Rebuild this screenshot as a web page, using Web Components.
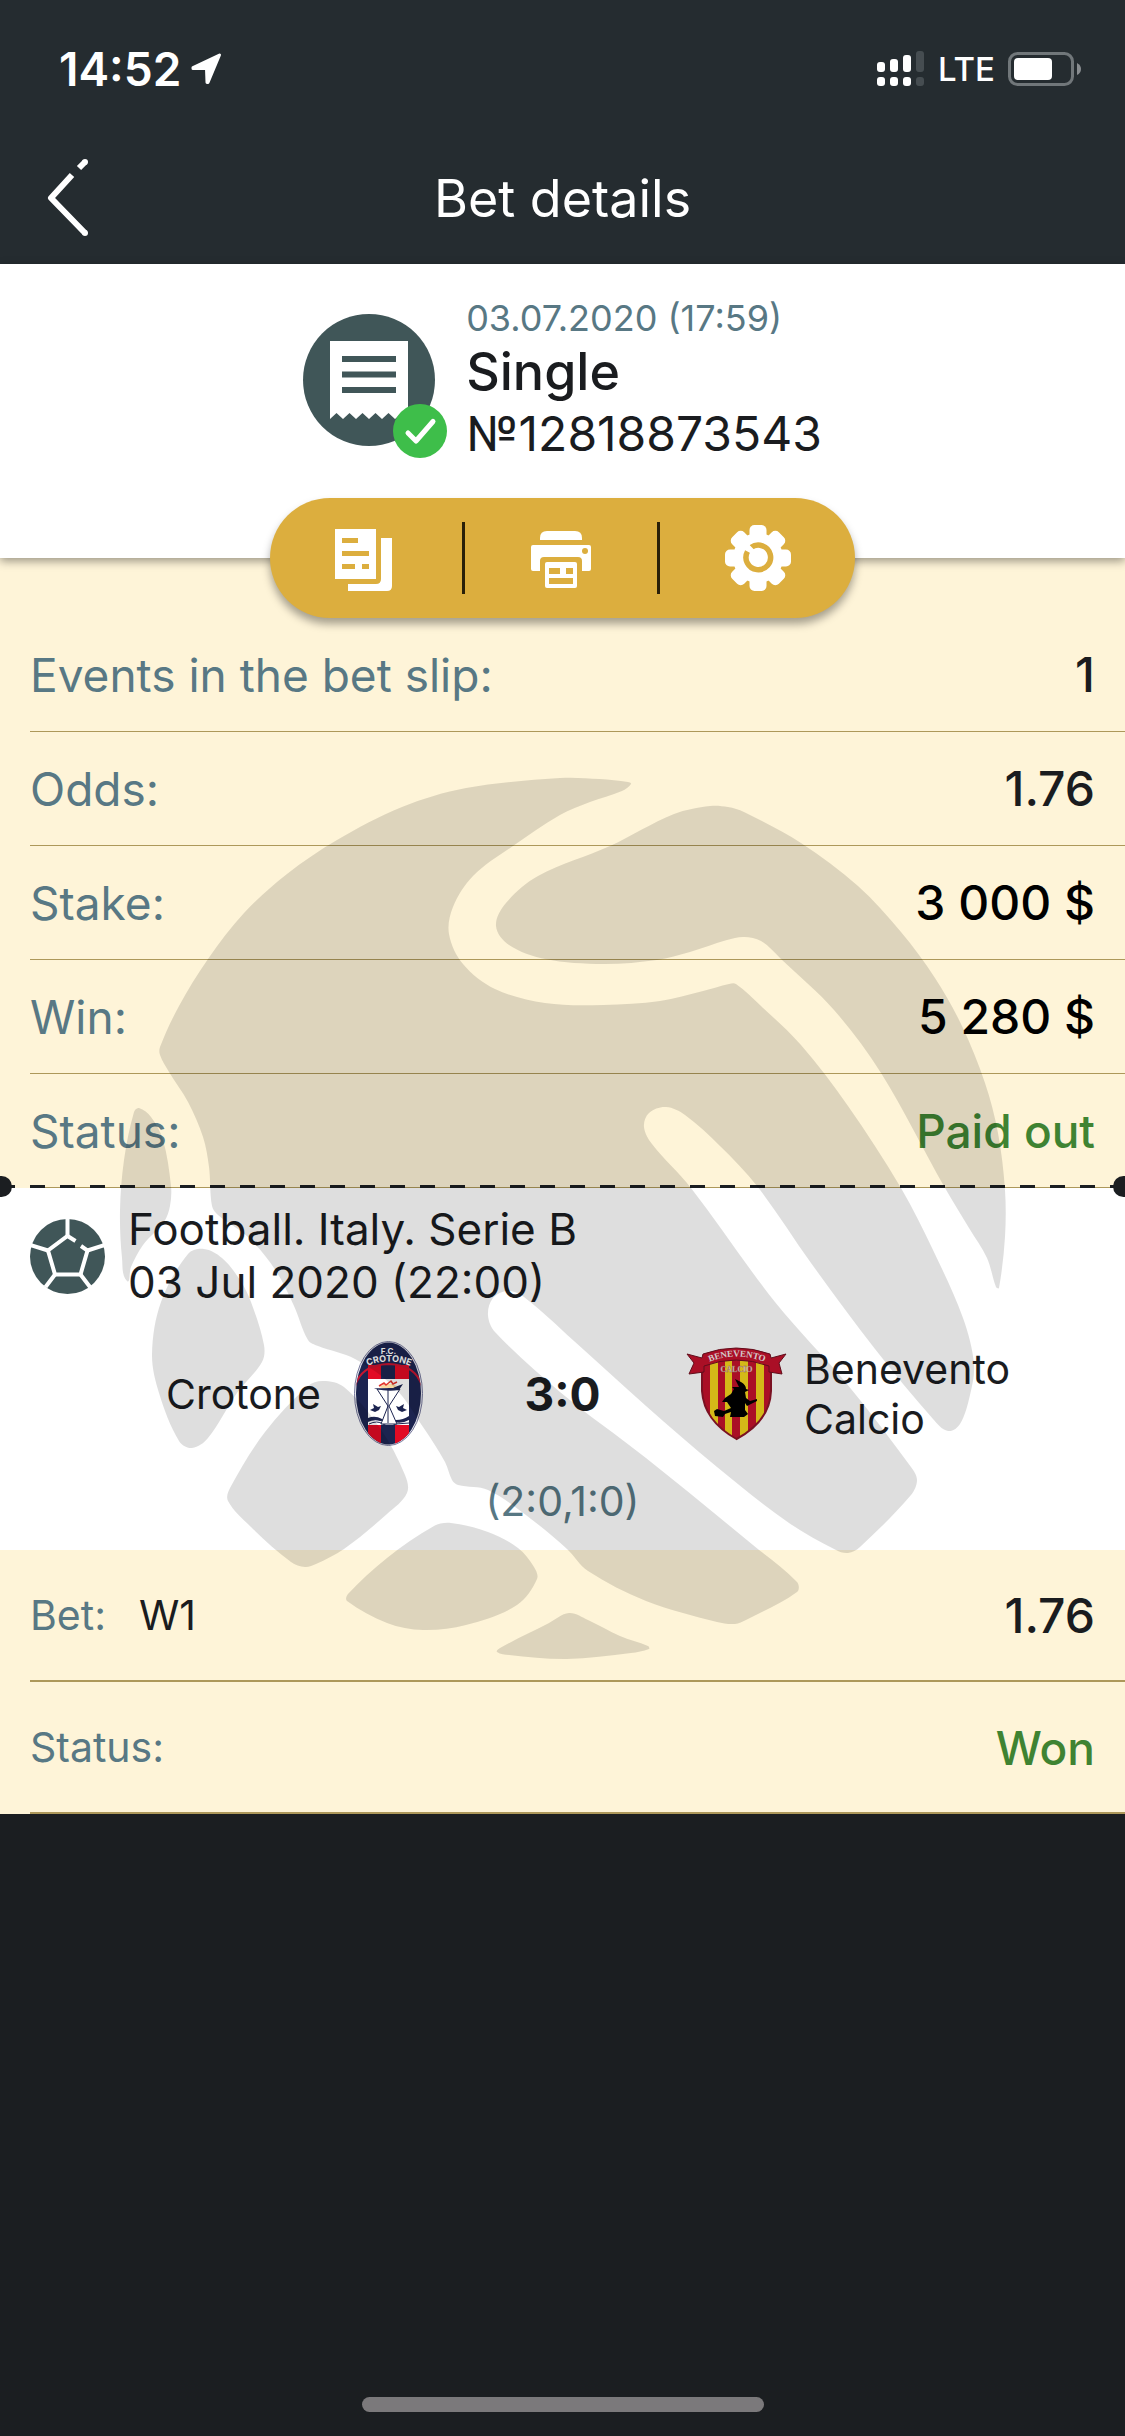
<!DOCTYPE html>
<html lang="en">
<head>
<meta charset="utf-8">
<meta name="viewport" content="width=device-width, initial-scale=1">
<title>Bet details</title>
<style>
  body {
    margin: 0;
    background: #1b1e21;
    color: #1a1c1f;
    font-family: Inter, Roboto, "Liberation Sans", sans-serif;
  }
  .app {
    display: flex;
    flex-direction: column;
    min-height: 100vh;
  }
  .details {
    position: relative;
    background: #fef4d8;
  }
  .money { color: #000; }
  .good { color: #3f8332; font-size: 46px; }
</style>
</head>
<body>
<div class="app">
  <status-bar>14:52<span slot="network">LTE</span></status-bar>
  <page-header>Bet details</page-header>
  <bet-summary>
    <span slot="date">03.07.2020 (17:59)</span>
    <span slot="type">Single</span>
    <span slot="number">№12818873543</span>
  </bet-summary>
  <bet-toolbar></bet-toolbar>
  <main class="details">
    <info-row label="Events in the bet slip:">1</info-row>
    <info-row label="Odds:">1.76</info-row>
    <info-row label="Stake:"><span class="money">3 000 $</span></info-row>
    <info-row label="Win:"><span class="money">5 280 $</span></info-row>
    <info-row label="Status:"><span class="good">Paid out</span></info-row>
    <tear-line></tear-line>
    <match-card>
      <span slot="league">Football. Italy. Serie B</span>
      <span slot="date">03 Jul 2020 (22:00)</span>
      <span slot="home">Crotone</span>
      <crotone-crest slot="home-crest"></crotone-crest>
      <span slot="score">3:0</span>
      <benevento-crest slot="away-crest"></benevento-crest>
      <span slot="away">Benevento Calcio</span>
      <span slot="periods">(2:0,1:0)</span>
    </match-card>
    <info-row size="large" label="Bet:"><span slot="pick">W1</span>1.76</info-row>
    <info-row size="large" label="Status:"><span class="good">Won</span></info-row>
    <ball-watermark></ball-watermark>
  </main>
  <home-indicator></home-indicator>
</div>

<script>
class StatusBar extends HTMLElement {
  constructor() {
    super();
    this.attachShadow({mode: "open"}).innerHTML = `
      <style>
        :host {
          display: flex;
          justify-content: space-between;
          align-items: center;
          height: 138px;
          padding: 0 43px 0 59px;
          background: #252c30;
          color: #fff;
        }
        div { display: flex; align-items: center; }
        .time { gap: 10px; font-size: 46px; font-weight: 600; }
        .state { gap: 13px; font-size: 33px; font-weight: 500; }
        svg { display: block; }
      </style>
      <div class="time"><span><slot></slot></span>
        <svg width="31" height="32" viewBox="0 0 31 32"><path fill="#fff" stroke="#fff" stroke-width="3" stroke-linejoin="round" d="M2 14.500L28.500 2L17 29.500L16 29.500L15.500 15.500L2 15.500Z"/></svg>
      </div>
      <div class="state">
        <svg width="48" height="36" viewBox="0 0 48 36" fill="#fff">
          <rect y="11" width="8" height="10" rx="3"/><rect y="26" width="8" height="9" rx="3"/>
          <rect x="13" y="8" width="8" height="13" rx="3"/><rect x="13" y="26" width="8" height="9" rx="3"/>
          <rect x="26" y="4" width="8" height="17" rx="3"/><rect x="26" y="26" width="8" height="9" rx="3"/>
          <g fill="#464d51"><rect x="39" width="8" height="21" rx="3"/><rect x="39" y="26" width="8" height="9" rx="3"/></g>
        </svg>
        <slot name="network"></slot>
        <svg width="74" height="34" viewBox="0 0 74 34">
          <rect x="1.500" y="1.500" width="63" height="31" rx="8" fill="none" stroke="#71777a" stroke-width="3"/>
          <rect x="6" y="6" width="38" height="22" rx="4" fill="#fff"/>
          <path d="M69 11q4 2 4 6t-4 6z" fill="#898d90"/>
        </svg>
      </div>`;
  }
}

class PageHeader extends HTMLElement {
  constructor() {
    super();
    this.attachShadow({mode: "open"}).innerHTML = `
      <style>
        :host {
          box-sizing: border-box;
          display: grid;
          grid-template-columns: 120px 1fr 120px;
          align-items: center;
          height: 126px;
          padding-bottom: 6px;
          background: #252c30;
          color: #fff;
        }
        button {
          height: 100%;
          padding: 0 0 0 46px;
          border: 0;
          background: none;
          text-align: left;
        }
        svg { display: block; }
        h1 { margin: 0; font-size: 52px; font-weight: 400; text-align: center; }
      </style>
      <button aria-label="Back">
        <svg width="44" height="82" viewBox="0 0 44 82" fill="none" stroke="#fff" stroke-width="6" stroke-linejoin="round">
          <path d="M26 18L5 41L39 76"/>
          <path d="M33 11L39 5"/>
          <g fill="#fff" stroke="none"><circle cx="39" cy="5" r="3"/><circle cx="39" cy="76" r="3"/></g>
        </svg>
      </button>
      <h1><slot></slot></h1>`;
  }
}

class BetSummary extends HTMLElement {
  constructor() {
    super();
    this.attachShadow({mode: "open"}).innerHTML = `
      <style>
        :host {
          display: flex;
          justify-content: center;
          align-items: center;
          gap: 19px;
          padding: 32px 30px 94px;
          background: #fff;
          box-shadow: 0 3px 9px rgba(0, 0, 0, .4);
          position: relative;
        }
        svg { display: block; }
        .date { color: #587884; font-size: 36px; line-height: 44px; }
        .type { font-size: 52px; line-height: 64px; font-weight: 500; }
        .number { font-size: 48px; line-height: 60px; }
      </style>
      <svg width="144" height="156" viewBox="0 -12 144 156">
        <circle cx="66" cy="66" r="66" fill="#405658"/>
        <path fill="#fff" d="M27 27H105V105L98.500 99L92 105L85.500 99L79 105L72.500 99L66 105L59.500 99L53 105L46.500 99L40 105L33.500 99L27 105Z"/>
        <path stroke="#405658" stroke-width="6" d="M39 45H93M39 60.500H93M39 76H93"/>
        <circle cx="117" cy="117" r="27" fill="#3ebe4a"/>
        <path d="M105 119L113 127L130 107.500" fill="none" stroke="#fff" stroke-width="5" stroke-linecap="round" stroke-linejoin="round"/>
      </svg>
      <div>
        <div class="date"><slot name="date"></slot></div>
        <div class="type"><slot name="type"></slot></div>
        <div class="number"><slot name="number"></slot></div>
      </div>`;
  }
}

class BetToolbar extends HTMLElement {
  constructor() {
    super();
    this.attachShadow({mode: "open"}).innerHTML = `
      <style>
        :host { display: block; background: #fef4d8; }
        nav {
          position: relative;
          z-index: 1;
          display: grid;
          grid-template-columns: repeat(3, 1fr);
          align-items: center;
          width: 52%;
          height: 120px;
          margin: -60px auto 0;
          border-radius: 60px;
          background: #dcae3e;
          box-shadow: 0 6px 9px rgba(0, 0, 0, .35);
        }
        button {
          display: flex;
          justify-content: center;
          align-items: center;
          height: 72px;
          padding: 0;
          border: 0;
          border-right: 3px solid #2a2008;
          background: none;
        }
        button:last-child { border: 0; }
        svg { display: block; }
      </style>
      <nav>
        <button aria-label="Copy bet slip">
          <svg width="66" height="66" viewBox="0 -3 66 66">
            <path fill="#fff" d="M2 1H43V51H2ZM48 10H59V58q0 5-5 5H15V56H43q5 0 5-5Z"/>
            <path fill="#dcae3e" d="M9 10h16v5H9zM9 23h27v5H9zM9 36h13v5H9zM29 36h7v5h-7z"/>
          </svg>
        </button>
        <button aria-label="Print">
          <svg width="66" height="66" viewBox="0 -3 66 66">
            <path fill="#fff" d="M12 12V10Q12 3 19 3H47Q54 3 54 10V12ZM5 17H61q2 0 2 2V41q0 2-2 2H54V33q0-4-4-4H16q-4 0-4 4V43H5q-2 0-2-2V19q0-2 2-2Z"/>
            <rect x="17" y="34" width="32" height="26" rx="2" fill="#fff"/>
            <path fill="#dcae3e" d="M21 40h11v6H21zM38 40h7v6h-7zM21 50h24v6H21z"/>
            <circle cx="57" cy="23" r="3" fill="#dcae3e"/>
          </svg>
        </button>
        <button aria-label="Settings">
          <svg width="66" height="66" viewBox="0 0 66 66">
            <g fill="#fff">
              <circle cx="33" cy="33" r="25"/>
              <rect x="24.500" width="17" height="66" rx="5"/>
              <rect x="24.500" width="17" height="66" rx="5" transform="rotate(45 33 33)"/>
              <rect x="24.500" width="17" height="66" rx="5" transform="rotate(90 33 33)"/>
              <rect x="24.500" width="17" height="66" rx="5" transform="rotate(135 33 33)"/>
            </g>
            <path d="M26 22.500A12.300 12.300 0 1 1 22.500 26.500" fill="none" stroke="#dcae3e" stroke-width="5.500"/>
            <path d="M22 21L33 32" stroke="#fff" stroke-width="5"/>
          </svg>
        </button>
      </nav>`;
  }
}

class InfoRow extends HTMLElement {
  constructor() {
    super();
    this.attachShadow({mode: "open"}).innerHTML = `
      <style>
        :host {
          box-sizing: border-box;
          display: flex;
          align-items: center;
          height: 114px;
          margin-left: 30px;
          padding-right: 30px;
          border-bottom: 1px solid #ad985a;
          font-size: 46px;
        }
        :host([size="large"]) {
          height: 132px;
          border-bottom-width: 2px;
        }
        .label { color: #587884; }
        :host([size="large"]) .label,
        ::slotted([slot="pick"]) { font-size: 41px; }
        ::slotted([slot="pick"]) { margin-left: 33px; }
        .value { margin-left: auto; font-size: 48px; font-weight: 500; }
      </style>
      <span class="label"></span>
      <slot name="pick"></slot>
      <span class="value"><slot></slot></span>`;
  }

  connectedCallback() {
    this.shadowRoot.querySelector(".label").textContent = this.getAttribute("label");
  }
}

class TearLine extends HTMLElement {
  constructor() {
    super();
    this.attachShadow({mode: "open"}).innerHTML = `
      <style>
        :host {
          position: relative;
          display: block;
          height: 3px;
          margin-top: -3px;
          background: repeating-linear-gradient(90deg, #1b1e21 0 15px, transparent 15px 30px);
        }
        :host::before, :host::after {
          content: "";
          position: absolute;
          top: -9px;
          width: 21px;
          height: 21px;
          border-radius: 50%;
          background: #1b1e21;
        }
        :host::before { left: -9px; }
        :host::after { right: -9px; }
      </style>`;
  }
}

class MatchCard extends HTMLElement {
  constructor() {
    super();
    this.attachShadow({mode: "open"}).innerHTML = `
      <style>
        :host { display: block; padding: 15px 30px 24px; background: #fff; }
        .event {
          display: flex;
          align-items: center;
          gap: 23px;
          font-size: 44px;
          line-height: 53px;
        }
        .event div div { white-space: nowrap; }
        svg { display: block; }
        .teams {
          display: grid;
          grid-template-columns: 1fr 243px 1fr;
          align-items: center;
          margin: 32px 0 30px;
          font-size: 41px;
          line-height: 50px;
        }
        .team { display: flex; align-items: center; gap: 15px; }
        .home { justify-content: flex-end; }
        .score { font-size: 46px; font-weight: 700; text-align: center; }
        .periods { color: #587884; font-size: 41px; line-height: 50px; text-align: center; }
      </style>
      <div class="event">
        <svg width="75" height="75" viewBox="0 0 75 75">
          <circle cx="37.500" cy="37.500" r="37.500" fill="#405658"/>
          <g fill="none" stroke="#fff" stroke-width="4">
            <path d="M45.500 22L37.500 17L18 31.500L25 55.500H50.500L57.500 31.500L51 27"/>
            <path d="M37.500 17.500V0M18 31.500L0 26M57.500 31.500L75 26M25 55.500L15.500 68M50.500 55.500L60 68"/>
          </g>
        </svg>
        <div>
          <div><slot name="league"></slot></div>
          <div><slot name="date"></slot></div>
        </div>
      </div>
      <div class="teams">
        <div class="team home"><slot name="home"></slot><slot name="home-crest"></slot></div>
        <div class="score"><slot name="score"></slot></div>
        <div class="team"><slot name="away-crest"></slot><slot name="away"></slot></div>
      </div>
      <div class="periods"><slot name="periods"></slot></div>`;
  }
}

class CrotoneCrest extends HTMLElement {
  constructor() {
    super();
    this.attachShadow({mode: "open"}).innerHTML = `
      <style>
        :host { display: block; flex: none; }
        svg { display: block; }
      </style>
      <svg width="105" height="105" viewBox="0 0 105 105">
        <clipPath id="oval"><ellipse cx="52.500" cy="52.500" rx="32.500" ry="51"/></clipPath>
        <ellipse cx="52.500" cy="52.500" rx="34" ry="52" fill="#e9e9f0" stroke="#77799c"/>
        <g clip-path="url(#oval)">
          <path fill="#1c2450" d="M0 0H105V105H0Z"/>
          <path fill="#e20b24" d="M32 24H45V105H32ZM59 24H73V105H59Z"/>
          <path fill="none" stroke="#c61530" stroke-width="2" d="M18 50Q22 24 52.500 23Q83 24 87 50"/>
          <path fill="#fff" d="M32 38H73V84H32Z"/>
          <path fill="#1c2450" d="M32 77Q39 74 46 78T60 79Q67 79 73 75V79Q66 83 58 81T44 80Q38 78 32 81Z"/>
          <path fill="none" stroke="#1c2450" d="M33 83Q41 79 47 83T60 83L73 82"/>
        </g>
        <path fill="#fff" stroke="#1c2450" d="M41 48H64L53 65L61 83H45L52 65Z"/>
        <path fill="none" stroke="#1c2450" d="M52 49V82"/>
        <path fill="#1c2450" d="M38 47Q53 49 67 43L63 49Q52 51 40 48Z"/>
        <path fill="#f7d8a0" d="M43 46Q52 40 61 45L57 47H46Z"/>
        <path fill="none" stroke="#e2352c" stroke-width="1.500" d="M43 45L48 42L50 44L55 40L57 43L61 41"/>
        <path fill="#1c2450" d="M34 69L38 67L37 63L42 66L45 65L43 69L39 71ZM71 69L67 67L68 63L63 66L60 65L62 69L66 71Z"/>
        <path id="arc" fill="none" d="M27 27Q52.500 14 79 27"/>
        <g fill="#fff" font-family="Inter, sans-serif" font-weight="700" text-anchor="middle">
          <text x="52.500" y="13" font-size="8">F.C.</text>
          <text font-size="9"><textPath href="#arc" startOffset="50%">CROTONE</textPath></text>
        </g>
      </svg>`;
  }
}

class BeneventoCrest extends HTMLElement {
  constructor() {
    super();
    this.attachShadow({mode: "open"}).innerHTML = `
      <style>
        :host { display: block; flex: none; }
        svg { display: block; }
      </style>
      <svg width="105" height="105" viewBox="0 0 105 105">
        <clipPath id="shield"><path d="M18 22Q52 4 87 22V50Q86 80 52.500 98Q20 80 18 50Z"/></clipPath>
        <g clip-path="url(#shield)">
          <path fill="#c4122c" d="M0 0H105V105H0Z"/>
          <path fill="#f4d51c" d="M26 20H34V105H26ZM41 20H48V105H41ZM56 20H64V105H56ZM72 20H80V105H72Z"/>
        </g>
        <path fill="none" stroke="#8d1428" stroke-width="2" d="M18 22V50Q20 80 52.500 98Q86 80 87 50V22"/>
        <path fill="#c4122c" stroke="#701020" stroke-linejoin="round" d="M19 13Q52 1 86 13L87 17L102 13L95 22L98 33L85 31V25Q52 13 20 25V31L5 33L10 22L3 13L18 17Z"/>
        <path fill="#000" d="M51 38L57 41Q62 44 62 48L65 49L61 51L62 57L66 60L73 58L73 60L63 65L61 62L61 69L64 73L60 76H46L47 71L41 73L39 76L31 75L30 70L33 68L40 70L47 67L43 61H38L41 57L47 53L50 48L48 46L55 46Z"/>
        <path id="ribbon" fill="none" d="M23 22Q52.500 9 83 22"/>
        <g fill="#f3e8ea" font-family="Liberation Serif, serif" font-weight="700" text-anchor="middle">
          <text font-size="9"><textPath href="#ribbon" startOffset="50%">BENEVENTO</textPath></text>
          <text x="52.500" y="31" font-size="8" stroke="#b0705a" stroke-width=".3">CALCIO</text>
        </g>
      </svg>`;
  }
}

// Outlines of the ball patches, drawn as smooth closed curves.
const PATCHES = [
  "631,784 622,791 590,802 560,815 513,846 473,876 453,907 449,934 463,964 495,989 545,1003 603,1005 660,1001 703,991 729,984 736,984 761,1006 801,1045 848,1106 901,1188 933,1250 963,1318 974,1364 970,1395 960,1424 948,1431 933,1419 875,1349 811,1263 757,1186 720,1146 685,1115 666,1107 649,1113 644,1127 652,1144 691,1188 775,1302 847,1384 911,1467 917,1480 911,1495 860,1547 848,1553 836,1550 789,1523 717,1467 646,1406 574,1341 524,1297 508,1291 493,1298 488,1315 495,1332 560,1392 646,1458 753,1545 797,1582 797,1592 746,1620 735,1624 717,1622 646,1601 588,1571 567,1549 531,1519 488,1490 458,1485 452,1480 445,1462 423,1427 395,1388 355,1359 318,1346 308,1340 294,1306 276,1271 248,1237 218,1215 212,1206 209,1167 203,1137 188,1102 169,1072 160,1055 160,1047 179,1006 208,959 244,913 287,874 337,840 402,807 466,788 560,778 600,779 628,782",
  "710,806 728,807 744,812 801,843 858,886 901,932 935,978 962,1026 985,1083 998,1133 1005,1190 1005,1237 999,1288 996,1287 987,1258 969,1228 945,1188 881,1073 834,1010 781,959 761,941 744,937 727,940 690,952 657,960 603,964 545,959 509,945 496,926 506,903 538,876 610,846 674,814",
  "139,1108 151,1117 163,1140 171,1186 170,1206 164,1222 143,1245 131,1267 127,1281 122,1258 120,1210 124,1160 134,1112",
  "204,1249 222,1258 240,1280 251,1302 264,1345 262,1362 237,1393 208,1438 192,1448 179,1441 159,1393 152,1354 161,1302 188,1254",
  "323,1381 344,1387 380,1428 405,1475 407,1493 387,1514 344,1549 316,1564 305,1567 291,1562 251,1527 228,1501 230,1488 265,1432 308,1386",
  "451,1523 488,1532 518,1548 534,1567 537,1579 517,1605 466,1625 423,1630 387,1623 347,1601 348,1594 387,1558 434,1526",
  "569,1613 588,1620 620,1636 648,1646 649,1649 631,1653 567,1659 509,1655 497,1652 500,1648 549,1623"
];

function smoothPath(outline) {
  const p = outline.split(" ").map(pair => pair.split(",").map(Number));
  const n = p.length;
  let d = `M${p[0]}`;
  for (let i = 0; i < n; i++) {
    const a = p[(i + n - 1) % n], b = p[i], c = p[(i + 1) % n], e = p[(i + 2) % n];
    // keep handles at a third of the segment so tight corners don't overshoot
    const len = Math.hypot(c[0] - b[0], c[1] - b[1]) / 3;
    const handle = (from, to) => {
      const x = to[0] - from[0], y = to[1] - from[1], l = Math.hypot(x, y) || 1;
      return [x / l * len, y / l * len];
    };
    const h1 = handle(a, c), h2 = handle(b, e);
    d += `C${b[0] + h1[0]},${b[1] + h1[1]} ${c[0] - h2[0]},${c[1] - h2[1]} ${c}`;
  }
  return d + "Z";
}

class BallWatermark extends HTMLElement {
  constructor() {
    super();
    this.attachShadow({mode: "open"}).innerHTML = `
      <style>
        :host {
          position: absolute;
          inset: 0;
          overflow: hidden;
          pointer-events: none;
        }
        svg { display: block; width: 100%; height: 100%; }
      </style>
      <svg viewBox="0 618 1125 1196" fill="#000" fill-opacity=".13" aria-hidden="true">
        ${PATCHES.map(outline => `<path d="${smoothPath(outline)}"/>`).join("")}
      </svg>`;
  }
}

class HomeIndicator extends HTMLElement {
  constructor() {
    super();
    this.attachShadow({mode: "open"}).innerHTML = `
      <style>
        :host { display: block; margin-top: auto; padding: 30px 0 24px; }
        div {
          width: 402px;
          height: 15px;
          margin: 0 auto;
          border-radius: 8px;
          background: #7b797b;
        }
      </style>
      <div></div>`;
  }
}

customElements.define("status-bar", StatusBar);
customElements.define("page-header", PageHeader);
customElements.define("bet-summary", BetSummary);
customElements.define("bet-toolbar", BetToolbar);
customElements.define("info-row", InfoRow);
customElements.define("tear-line", TearLine);
customElements.define("match-card", MatchCard);
customElements.define("crotone-crest", CrotoneCrest);
customElements.define("benevento-crest", BeneventoCrest);
customElements.define("ball-watermark", BallWatermark);
customElements.define("home-indicator", HomeIndicator);
</script>
</body>
</html>
